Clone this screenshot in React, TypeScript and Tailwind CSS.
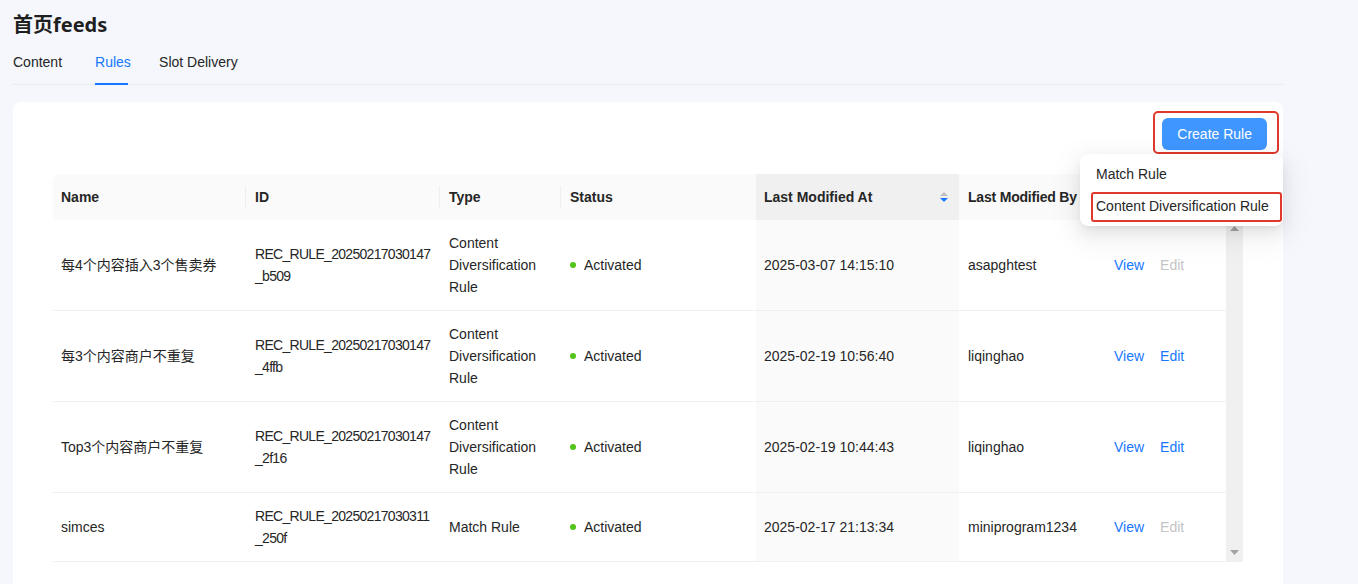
const rows = [
  {
    name: "每4个内容插入3个售卖券",
    id: ["REC_RULE_20250217030147", "_b509"],
    type: ["Content", "Diversification", "Rule"],
    at: "2025-03-07 14:15:10",
    by: "asapghtest",
    editable: false,
  },
  {
    name: "每3个内容商户不重复",
    id: ["REC_RULE_20250217030147", "_4ffb"],
    type: ["Content", "Diversification", "Rule"],
    at: "2025-02-19 10:56:40",
    by: "liqinghao",
    editable: true,
  },
  {
    name: "Top3个内容商户不重复",
    id: ["REC_RULE_20250217030147", "_2f16"],
    type: ["Content", "Diversification", "Rule"],
    at: "2025-02-19 10:44:43",
    by: "liqinghao",
    editable: true,
  },
  {
    name: "simces",
    id: ["REC_RULE_20250217030311", "_250f"],
    type: ["Match Rule"],
    at: "2025-02-17 21:13:34",
    by: "miniprogram1234",
    editable: false,
  },
];

const cols = "grid grid-cols-[193px_194px_121px_195px_203px_147px_120px]";

function Sep() {
  return <span className="absolute right-0 top-1/2 h-[22px] w-px -translate-y-1/2 bg-[#eeeeee]" />;
}

export default function App() {
  return (
    <div
      className="min-h-[584px] w-full bg-[#f5f7fc] text-[14px] text-[#262626]"
      style={{ fontFamily: '"Liberation Sans", "Noto Sans CJK SC", sans-serif' }}
    >
      <div className="ml-[13px] w-[1270px]">
        <h1
          className="pt-[11px] text-[20px] font-bold leading-[28px] text-[#1f1f1f]"
          style={{ fontFamily: '"Noto Sans", "Noto Sans CJK SC", sans-serif' }}
        >
          首页feeds
        </h1>

        <div className="mt-[2px] flex h-[44px] items-center border-b border-[#e8eaee]">
          <div className="flex h-full items-center">Content</div>
          <div className="relative ml-[33px] flex h-full w-[33px] items-center whitespace-nowrap text-[#1677ff]">
            Rules
            <span className="absolute bottom-[-1px] left-0 right-0 h-[2px] bg-[#1677ff]" />
          </div>
          <div className="ml-[31px] flex h-full items-center">Slot Delivery</div>
        </div>

        <div className="mt-[17px] h-[483px] rounded-t-lg bg-white px-[40px] pt-[16px]">
          <div className="mr-[-24px] flex justify-end">
            <div className="relative">
              <button className="h-[32px] rounded-md bg-[#4096ff] px-[15px] text-white">Create Rule</button>
              <span className="pointer-events-none absolute left-[-9px] right-[-12px] top-[-7px] bottom-[-4px] rounded-[5px] border-2 border-[#e0392b]" />
              <div className="absolute right-[-16px] top-[36px] z-10 w-[203px] rounded-lg bg-white p-[4px] shadow-[0_6px_16px_rgba(0,0,0,0.08),0_3px_6px_-4px_rgba(0,0,0,0.12),0_9px_28px_8px_rgba(0,0,0,0.05)]">
                <div className="flex h-[32px] items-center px-[12px]">Match Rule</div>
                <div className="relative flex h-[32px] items-center whitespace-nowrap px-[12px]">
                  Content Diversification Rule
                  <span className="pointer-events-none absolute left-[7px] right-[-3px] top-[2px] bottom-[0px] rounded-[3px] border-2 border-[#e0392b]" />
                </div>
              </div>
            </div>
          </div>

          <div className="mt-[24px] w-[1190px]">
            <div className={`${cols} h-[46px] items-center rounded-t-lg bg-[#fafafa] font-bold`}>
              <div className="relative flex h-full items-center px-[8px]">Name<Sep /></div>
              <div className="relative flex h-full items-center px-[9px]">ID<Sep /></div>
              <div className="relative flex h-full items-center px-[9px]">Type<Sep /></div>
              <div className="relative flex h-full items-center px-[9px]">Status</div>
              <div className="flex h-full items-center justify-between bg-[#f0f0f0] px-[8px]">
                Last Modified At
                <svg width="10" height="16" viewBox="0 0 10 16" className="mr-[2px]">
                  <path d="M1 7 L5 3 L9 7 Z" fill="#bfbfbf" />
                  <path d="M1 9 L5 13 L9 9 Z" fill="#1677ff" />
                </svg>
              </div>
              <div className="flex h-full items-center px-[9px] tracking-[-0.2px]">Last Modified By</div>
              <div />
            </div>

            <div className="flex">
              <div className="w-[1173px]">
                {rows.map((r) => (
                  <div key={r.id[1]} className={`${cols} border-b border-[#f0f0f0] leading-[22px]`}>
                    <div className="flex items-center px-[8px] py-[12px]">{r.name}</div>
                    <div className="flex flex-col justify-center px-[9px] py-[12px] tracking-[-0.7px]">
                      {r.id.map((l) => (
                        <span key={l}>{l}</span>
                      ))}
                    </div>
                    <div className="flex flex-col justify-center px-[9px] py-[12px]">
                      {r.type.map((l) => (
                        <span key={l}>{l}</span>
                      ))}
                    </div>
                    <div className="flex items-center gap-[8px] px-[9px] py-[12px]">
                      <span className="h-[6px] w-[6px] rounded-full bg-[#52c41a]" />
                      Activated
                    </div>
                    <div className="flex items-center bg-[#fafafa] px-[8px] py-[12px]">{r.at}</div>
                    <div className="flex items-center px-[9px] py-[12px]">{r.by}</div>
                    <div className="flex items-center gap-[16px] px-[8px] py-[12px]">
                      <span className="text-[#1677ff]">View</span>
                      <span className={r.editable ? "text-[#1677ff]" : "text-[#c4c4c4]"}>Edit</span>
                    </div>
                  </div>
                ))}
              </div>
              <div className="flex w-[17px] flex-col items-center justify-between border-b border-[#f0f0f0] bg-[#f0f0f0] py-[6px]">
                <svg width="9" height="5" viewBox="0 0 9 5">
                  <path d="M0 5 L4.5 0 L9 5 Z" fill="#a3a3a3" />
                </svg>
                <svg width="9" height="5" viewBox="0 0 9 5">
                  <path d="M0 0 L4.5 5 L9 0 Z" fill="#a3a3a3" />
                </svg>
              </div>
            </div>
          </div>
        </div>
      </div>
    </div>
  );
}
